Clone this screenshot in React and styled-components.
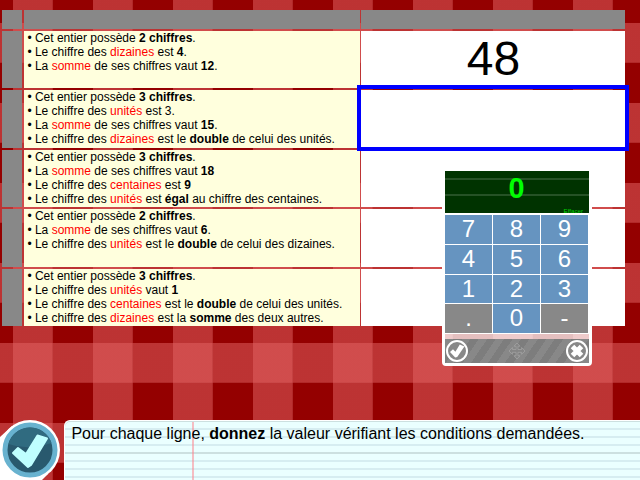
import React from "react";
import styled, { createGlobalStyle } from "styled-components";

const Global = createGlobalStyle`
  * { box-sizing: border-box; }
  body {
    margin: 0;
    overflow: hidden;
    font-family: "Liberation Sans", Arial, sans-serif;
    color: #000;
  }
`;

const Page = styled.main`
  position: relative;
  display: flex;
  flex-direction: column;
  justify-content: space-between;
  width: 640px;
  height: 480px;
  padding: 10px 0 0 2px;
  overflow: hidden;
  background-color: #940000;
  background-image:
    linear-gradient(90deg, rgba(228, 102, 102, 0.5) 39px, rgba(205, 80, 80, 0.5) 39px, rgba(205, 80, 80, 0.5) 40px, transparent 40px),
    linear-gradient(180deg, rgba(228, 102, 102, 0.5) 39px, rgba(205, 80, 80, 0.5) 39px, rgba(205, 80, 80, 0.5) 40px, transparent 40px);
  background-size: 80px 80px;
  background-position: 13px 0, 0 23px;
`;

const Table = styled.div`
  display: grid;
  grid-template-columns: 20px 336px 264px;
  grid-template-rows: 19px 57px 58px 57px 58px 57px;
  row-gap: 2px;
  width: 623px;
`;

const HeadCell = styled.div`
  background: #888;
  margin-left: ${(p) => p.$gap || 0}px;
  margin-right: ${(p) => p.$pull || 0}px;
`;

const Clues = styled.div`
  margin: 0 0 0 2px;
  width: 336px;
  padding-left: 3.4px;
  background: #ffffdd;
  font-size: 12px;
  line-height: 14px;
  white-space: nowrap;
`;

const Key = styled.em`
  font-style: normal;
  color: #f00;
`;

const Answer = styled.div`
  position: relative;
  display: flex;
  justify-content: center;
  align-items: center;
  margin-left: 3px;
  width: 264px;
  padding: 0 0 2px 1px;
  background: #fff;
  font-size: 48px;
  line-height: 55px;
`;

const Focus = styled.div`
  position: absolute;
  z-index: 1;
  inset: -5px -4px -3px;
  border: 4px solid #00f;
`;

const Keypad = styled.section`
  position: absolute;
  z-index: 2;
  left: 442px;
  top: 168px;
  width: 150px;
  height: 198px;
  display: flex;
  flex-direction: column;
  border: 3px solid #fff;
  border-radius: 4px;
  background: rgba(255, 255, 255, 0.75);
`;

const Screen = styled.div`
  position: relative;
  height: 42px;
  padding-right: 1px;
  background: linear-gradient(#003300 7px, #265226 7px, #265226 9px, #003300 9px, #003300 23px, #265226 23px, #265226 25px, #003300 25px);
  color: #0f0;
  font-size: 28.8px;
  line-height: 34px;
  font-weight: bold;
  text-align: center;
`;

const Erase = styled.span`
  position: absolute;
  right: 6px;
  bottom: -1px;
  font-size: 6.2px;
  font-weight: normal;
  line-height: 7px;
  color: #00d400;
`;

const Keys = styled.div`
  display: grid;
  grid-template-columns: 47px 47px 47px;
  grid-template-rows: 29px 29px 28px 29px;
  gap: 1px;
  padding: 2px 1px 1px 0;
  background: #fff;
`;

const KeyButton = styled.div`
  background: ${(p) => (p.$muted ? "#888" : "#6694c0")};
  color: #fff;
  font-size: 24px;
  line-height: 28px;
  text-align: center;
`;

const PadBar = styled.div`
  display: flex;
  justify-content: space-between;
  align-items: center;
  height: 24px;
  margin-top: auto;
  background: repeating-linear-gradient(124deg, #888 0, #888 7px, #7d7d7d 7px, #7d7d7d 14px);
`;

const Footer = styled.footer`
  display: flex;
  height: 60px;
  margin-left: -2px;
`;

const Badge = styled.svg`
  display: block;
  width: 64px;
  height: 60px;
`;

const Instruction = styled.div`
  flex: 1;
  height: 60px;
  padding: 1px 0 0 6.4px;
  border: 1px solid #fff;
  border-width: 1px 0 0 1px;
  border-radius: 6px 0 0 0;
  background-color: #eaffff;
  background-image:
    linear-gradient(90deg, transparent 127px, rgba(255, 125, 135, 0.5) 127px, rgba(255, 125, 135, 0.5) 129px, transparent 129px),
    linear-gradient(transparent 31px, #cce0e0 31px, #cce0e0 33px, transparent 33px),
    linear-gradient(#d6edf1 2px, transparent 2px);
  background-size: 100% 100%, 100% 100%, 100% 8px;
  background-position: 0 0, 0 0, 0 7px;
  box-shadow: inset 0 1px #cce0e0;
  font-size: 16px;
  line-height: 24px;
`;

const clues = [
  [
    <>Cet entier possède <b>2 chiffres</b>.</>,
    <>Le chiffre des <Key>dizaines</Key> est <b>4</b>.</>,
    <>La <Key>somme</Key> de ses chiffres vaut <b>12</b>.</>,
  ],
  [
    <>Cet entier possède <b>3 chiffres</b>.</>,
    <>Le chiffre des <Key>unités</Key> est 3.</>,
    <>La <Key>somme</Key> de ses chiffres vaut <b>15</b>.</>,
    <>Le chiffre des <Key>dizaines</Key> est le <b>double</b> de celui des unités.</>,
  ],
  [
    <>Cet entier possède <b>3 chiffres</b>.</>,
    <>La <Key>somme</Key> de ses chiffres vaut <b>18</b></>,
    <>Le chiffre des <Key>centaines</Key> est <b>9</b></>,
    <>Le chiffre des <Key>unités</Key> est <b>égal</b> au chiffre des centaines.</>,
  ],
  [
    <>Cet entier possède <b>2 chiffres</b>.</>,
    <>La <Key>somme</Key> de ses chiffres vaut <b>6</b>.</>,
    <>Le chiffre des <Key>unités</Key> est le <b>double</b> de celui des dizaines.</>,
  ],
  [
    <>Cet entier possède <b>3 chiffres</b>.</>,
    <>Le chiffre des <Key>unités</Key> vaut <b>1</b></>,
    <>Le chiffre des <Key>centaines</Key> est le <b>double</b> de celui des unités.</>,
    <>Le chiffre des <Key>dizaines</Key> est la <b>somme</b> des deux autres.</>,
  ],
];

const keys = ["7", "8", "9", "4", "5", "6", "1", "2", "3", ".", "0", "-"];

const CheckIcon = () => (
  <svg width="24" height="24" viewBox="0 0 24 24">
    <circle cx="12" cy="12" r="10" fill="#888" stroke="#fff" strokeWidth="2" />
    <path d="M5 13 8 10.3l2.4 2.5L14.8 5.5l4.6 2L12.2 18l-2 .4z" fill="#fff" />
  </svg>
);

const MoveIcon = () => (
  <svg width="18" height="18" viewBox="0 0 18 18">
    <path
      d="m9 1 3 3.2h-2v3.3h3.6v-2L17 9l-3.4 3.3v-2H10v3.5h2L9 17l-3-3.2h2v-3.5H4.4v2L1 9l3.4-3.5v2H8V4.2H6z"
      fill="#858585" stroke="#a3a3a3" strokeWidth=".8"
    />
  </svg>
);

const CloseIcon = () => (
  <svg width="24" height="24" viewBox="0 0 24 24">
    <circle cx="12" cy="12" r="10" fill="#888" stroke="#fff" strokeWidth="2" />
    <path d="m7.5 7.5 9 9m0-9-9 9" stroke="#fff" strokeWidth="5" />
  </svg>
);

export default function App() {
  return (
    <>
      <Global />
      <Page>
        <Table>
          <HeadCell />
          <HeadCell $gap={2} $pull={-2} />
          <HeadCell $gap={3} $pull={-3} />
          {clues.map((lines, row) => (
            <React.Fragment key={row}>
              <HeadCell />
              <Clues>
                {lines.map((line, i) => (
                  <div key={i}>• {line}</div>
                ))}
              </Clues>
              <Answer>
                {row === 0 && "48"}
                {row === 1 && <Focus />}
              </Answer>
            </React.Fragment>
          ))}
        </Table>
        <Footer>
          <Badge viewBox="0 0 64 60">
            <path d="M0 17 12 6 48 54 42 60H0z" fill="#fff" />
            <circle cx="30" cy="30" r="30" fill="#fff" />
            <circle cx="30" cy="30" r="25" fill="#29596e" stroke="#68b2cf" strokeWidth="5" />
            <path d="M8.5 24a22.5 22.5 0 0 1 43-1Q28 31 8.5 24z" fill="#306b80" />
            <path
              d="m13 33 5-5 8 6L37.5 15.5 47 18.5 31 45l-3 2z"
              fill="#bfffff" stroke="#bfffff" strokeWidth="2" strokeLinejoin="round"
            />
          </Badge>
          <Instruction>
            Pour chaque ligne, <b>donnez</b> la valeur vérifiant les conditions demandées.
          </Instruction>
        </Footer>
        <Keypad>
          <Screen>
            0<Erase>Effacer</Erase>
          </Screen>
          <Keys>
            {keys.map((k) => (
              <KeyButton key={k} $muted={k === "." || k === "-"}>{k}</KeyButton>
            ))}
          </Keys>
          <PadBar>
            <CheckIcon />
            <MoveIcon />
            <CloseIcon />
          </PadBar>
        </Keypad>
      </Page>
    </>
  );
}
